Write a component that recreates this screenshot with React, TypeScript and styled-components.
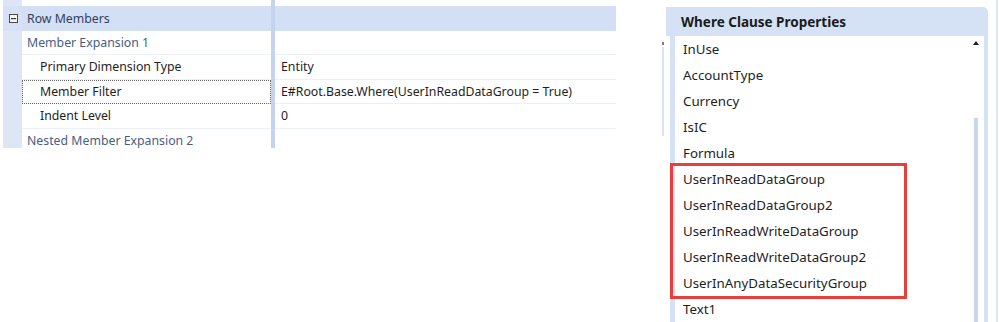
import styled, { createGlobalStyle } from 'styled-components';

const GlobalStyle = createGlobalStyle`
  html, body {
    margin: 0;
    padding: 0;
    background: #ffffff;
    font-family: "Segoe UI", "Noto Sans", "Open Sans", sans-serif;
    font-size: 12.3px;
    color: #1e1e1e;
  }
`;

const Page = styled.div`
  display: flex;
  align-items: flex-start;
  width: 999px;
  height: 322px;
  overflow: hidden;
`;

/* ---------- property grid ---------- */

const Grid = styled.div`
  margin-left: 3px;
  width: 613px;
  height: 148px;
  overflow: hidden;
  display: flex;
  flex-direction: column;
`;

const Row = styled.div<{ $h?: number; $band?: boolean }>`
  display: grid;
  grid-template-columns: 19px 249px 4px 341px;
  height: ${(p) => p.$h ?? 24.5}px;
  flex-shrink: 0;
  background: ${(p) => (p.$band ? '#d3dff5' : '#ffffff')};
`;

const Gutter = styled.div<{ $band?: boolean }>`
  background: ${(p) => (p.$band ? '#d6e1f5' : '#dce6f7')};
  display: flex;
  align-items: center;
  justify-content: center;
  padding-left: 2px;
`;

const Sep = styled.div`
  background: #c4d3ee;
`;

const Cell = styled.div<{ $indent?: number; $tone?: 'head' | 'group' | 'plain'; $line?: boolean; $focus?: boolean }>`
  display: flex;
  align-items: center;
  padding-left: ${(p) => p.$indent ?? 6}px;
  white-space: nowrap;
  overflow: hidden;
  box-sizing: border-box;
  border-bottom: ${(p) => (p.$line ? '1px solid #ebf0fa' : 'none')};
  color: ${(p) => (p.$tone === 'head' ? '#34425f' : p.$tone === 'group' ? '#4a5d86' : '#1e1e1e')};
  outline: ${(p) => (p.$focus ? '1px dotted #6a6a6a' : 'none')};
  outline-offset: -1px;
`;

const CollapseIcon = () => (
  <svg width="9" height="9" viewBox="0 0 9 9">
    <rect x="0.5" y="0.5" width="8" height="8" fill="#f4f4f4" stroke="#4a4a4a" />
    <rect x="2" y="4" width="5" height="1.2" fill="#3a3a3a" />
  </svg>
);

type PropRow = { name: string; value?: string; kind: 'group' | 'plain'; focus?: boolean };

const rows: PropRow[] = [
  { name: 'Member Expansion 1', kind: 'group' },
  { name: 'Primary Dimension Type', value: 'Entity', kind: 'plain' },
  { name: 'Member Filter', value: 'E#Root.Base.Where(UserInReadDataGroup = True)', kind: 'plain', focus: true },
  { name: 'Indent Level', value: '0', kind: 'plain' },
  { name: 'Nested Member Expansion 2', kind: 'group' },
];

/* ---------- where clause panel ---------- */

const SideMark = styled.div`
  margin-top: 42px;
  margin-left: 46px;
  width: 2px;
  height: 94px;
  background: linear-gradient(#7c7c7c 0 3px, transparent 3px 5px, #dbe4f5 5px);
`;

const Panel = styled.div`
  margin-left: 2px;
  margin-top: 7px;
  width: 322px;
  display: flex;
  flex-direction: column;
`;

const PanelHeader = styled.div`
  height: 29px;
  background: #d5e1f4;
  border-top-right-radius: 5px;
  display: flex;
  align-items: center;
  padding-left: 15px;
  font-weight: 700;
  font-size: 13.5px;
  color: #1b1b1b;
`;

const PanelBody = styled.div`
  display: flex;
  margin-left: 4px;
  border-left: 5px solid #d5e1f4;
  border-right: 4px solid #d5e1f4;
  height: 290px;
  background: #ffffff;
`;

const List = styled.div`
  flex: 1;
  display: flex;
  flex-direction: column;
  font-size: 13.3px;
`;

const Item = styled.div<{ $pad?: number }>`
  height: 26px;
  flex-shrink: 0;
  display: flex;
  align-items: center;
  padding-left: ${(p) => p.$pad ?? 8}px;
  color: #1e1e1e;
  white-space: nowrap;
`;

const Highlight = styled.div`
  width: 237px;
  box-sizing: border-box;
  margin: -3px 0 -3px -5px;
  border: 3px solid #e5403a;
  display: flex;
  flex-direction: column;
`;

const Scroll = styled.div`
  width: 8px;
  margin-right: 4px;
  display: flex;
  flex-direction: column;
  align-items: center;
`;

const ArrowUp = styled.div`
  margin-top: 5px;
  width: 0;
  height: 0;
  border-left: 3px solid transparent;
  border-right: 3px solid transparent;
  border-bottom: 4px solid #1e1e1e;
`;

const Thumb = styled.div`
  margin-top: 73px;
  width: 4px;
  flex: 1;
  background: #c9d6ef;
`;

const EdgeLine = styled.div`
  margin-left: 8px;
  width: 2px;
  height: 322px;
  background: #dde6f6;
`;

const before = ['InUse', 'AccountType', 'Currency', 'IsIC', 'Formula'];
const marked = [
  'UserInReadDataGroup',
  'UserInReadDataGroup2',
  'UserInReadWriteDataGroup',
  'UserInReadWriteDataGroup2',
  'UserInAnyDataSecurityGroup',
];
const after = ['Text1'];

export default function App() {
  return (
    <>
      <GlobalStyle />
      <Page>
        <Grid>
          <Row $h={6}>
            <Gutter />
            <div />
            <Sep />
            <div />
          </Row>
          <Row $band>
            <Gutter $band>
              <CollapseIcon />
            </Gutter>
            <Cell $indent={5} $tone="head">Row Members</Cell>
            <Sep />
            <Cell />
          </Row>
          {rows.map((r) => (
            <Row key={r.name}>
              <Gutter />
              <Cell $indent={r.kind === 'group' ? 5 : 18} $tone={r.kind} $line $focus={r.focus}>
                {r.name}
              </Cell>
              <Sep />
              <Cell $line>{r.value}</Cell>
            </Row>
          ))}
        </Grid>

        <SideMark />

        <Panel>
          <PanelHeader>Where Clause Properties</PanelHeader>
          <PanelBody>
            <List>
              {before.map((t) => (
                <Item key={t}>{t}</Item>
              ))}
              <Highlight>
                {marked.map((t) => (
                  <Item key={t} $pad={10}>
                    {t}
                  </Item>
                ))}
              </Highlight>
              {after.map((t) => (
                <Item key={t}>{t}</Item>
              ))}
            </List>
            <Scroll>
              <ArrowUp />
              <Thumb />
            </Scroll>
          </PanelBody>
        </Panel>

        <EdgeLine />
      </Page>
    </>
  );
}
